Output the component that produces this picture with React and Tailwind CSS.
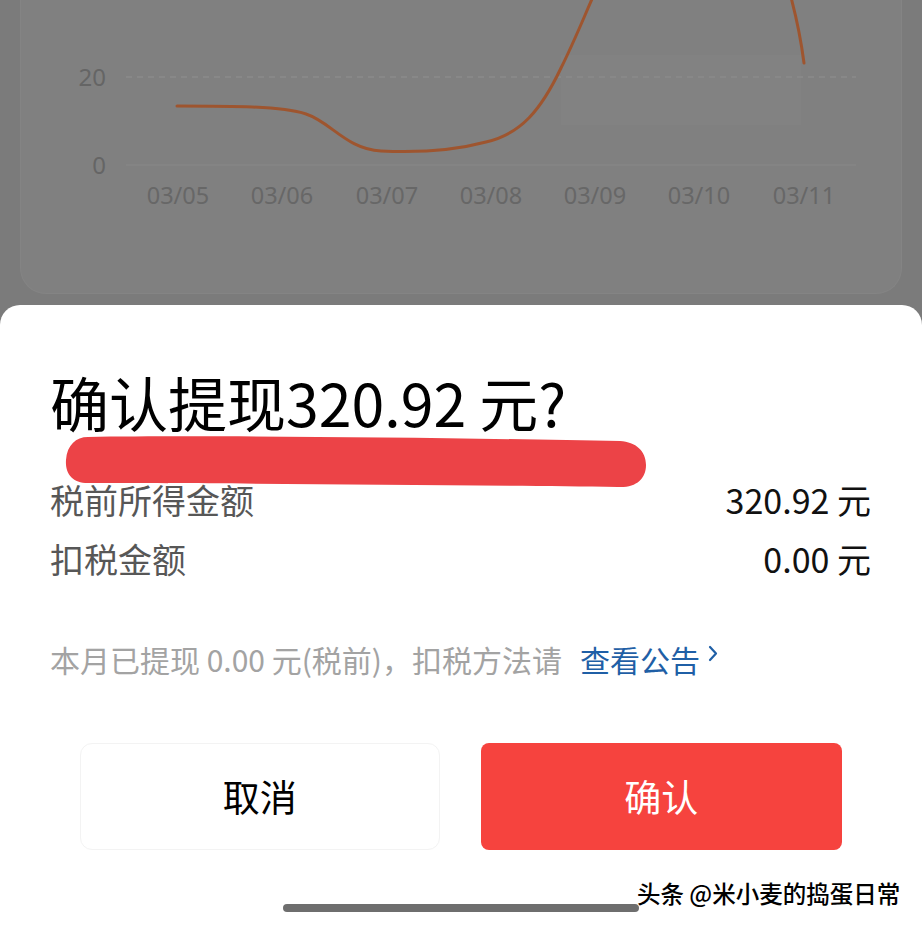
import React from "react";

const dates = [
  ["03/05", 177],
  ["03/06", 281],
  ["03/07", 386],
  ["03/08", 490],
  ["03/09", 594],
  ["03/10", 698],
  ["03/11", 803],
];

function Chart() {
  const ox = 20;
  return (
    <svg width="883" height="294" viewBox="0 0 883 294" className="block">
      <rect x={560 - ox} y="55" width="240" height="70" fill="#828282" />
      <line x1={125 - ox} y1="77" x2={855 - ox} y2="77" stroke="#8a8a8a" strokeWidth="1.5" strokeDasharray="6 5" />
      <line x1={125 - ox} y1="165" x2={855 - ox} y2="165" stroke="#868686" strokeWidth="1.5" />
      <text x={105 - ox} y="86" textAnchor="end" fontSize="24" fill="#656565" fontFamily="'Noto Sans', sans-serif">20</text>
      <text x={105 - ox} y="174" textAnchor="end" fontSize="24" fill="#656565" fontFamily="'Noto Sans', sans-serif">0</text>
      {dates.map(([d, x]) => (
        <text key={d} x={x - ox} y="204" textAnchor="middle" fontSize="23.5" fill="#676767" fontFamily="'Noto Sans', sans-serif">
          {d}
        </text>
      ))}
      <path
        d={`M${176 - ox},106 C${230 - ox},106 ${280 - ox},106 ${305 - ox},114 C${330 - ox},122 ${345 - ox},149 ${380 - ox},151 C${420 - ox},153 ${455 - ox},150 ${485 - ox},142 C${520 - ox},134 ${540 - ox},110 ${560 - ox},68 C${575 - ox},38 ${585 - ox},12 ${595 - ox},-10 C${610 - ox},-60 ${770 - ox},-60 ${788 - ox},-10 C${795 - ox},15 ${800 - ox},40 ${803 - ox},63`}
        fill="none"
        stroke="#9e552f"
        strokeWidth="3"
        strokeLinecap="round"
      />
    </svg>
  );
}

export default function App() {
  return (
    <div
      className="relative w-[922px] h-[928px] overflow-hidden bg-[#7b7b7b]"
      style={{ fontFamily: "'Noto Sans CJK SC', 'Noto Sans', sans-serif" }}
    >
      <div className="mx-[20px] h-[294px] rounded-b-[26px] bg-[#808080] border-x border-b border-[#848484] overflow-hidden">
        <Chart />
      </div>

      <div className="relative mt-[11px] h-[623px] rounded-t-[20px] bg-white flex flex-col">
        <svg
          className="absolute left-[64px] top-[128px]"
          width="584"
          height="56"
          viewBox="0 0 584 56"
        >
          <path
            d="M24,4 C150,2 400,5 556,8 C572,9 582,18 582,32 C582,46 572,55 554,54 C400,52 150,50 24,50 C8,50 1,40 2,27 C3,12 12,4 24,4 Z"
            fill="#ec4347"
          />
        </svg>

        <div className="pl-[50px] pt-[64px] text-[59px] leading-[66px] text-black">
          确认提现320.92 元?
        </div>

        <div className="mt-[43px] px-[50px] pr-[51px] flex flex-col gap-[15px] text-[34px] leading-[44px]">
          <div className="flex justify-between">
            <span className="text-[#575757]">税前所得金额</span>
            <span className="text-[#111]">320.92 元</span>
          </div>
          <div className="flex justify-between">
            <span className="text-[#575757]">扣税金额</span>
            <span className="text-[#111]">0.00 元</span>
          </div>
        </div>

        <div className="mt-[58px] pl-[50px] flex items-center text-[30px] leading-[40px]">
          <span className="text-[#a3a3a3]">本月已提现 0.00 元(税前)，扣税方法请</span>
          <span className="ml-[18px] text-[#1f5fa6]">查看公告</span>
          <svg className="ml-[8px] mb-[12px]" width="10" height="17" viewBox="0 0 10 17">
            <path d="M2,2 L8,8.5 L2,15" fill="none" stroke="#1f5fa6" strokeWidth="2.2" strokeLinecap="round" strokeLinejoin="round" />
          </svg>
        </div>

        <div className="mt-[64px] px-[80px] flex gap-[41px]">
          <button className="w-[360px] h-[107px] rounded-[12px] bg-white border border-[#f3f3f3] text-[37px] text-black">
            取消
          </button>
          <button className="w-[362px] h-[107px] rounded-[8px] bg-[#f6433e] text-[37px] text-white">
            确认
          </button>
        </div>

        <div className="mt-[54px] mx-auto w-[356px] h-[8px] rounded-full bg-[#6e6e6e]" />

        <div className="absolute left-[637px] top-[573px] text-[23.5px] leading-[30px] text-black font-medium [text-shadow:0_0_2px_#fff,0_0_2px_#fff]">
          头条 @米小麦的捣蛋日常
        </div>
      </div>
    </div>
  );
}
